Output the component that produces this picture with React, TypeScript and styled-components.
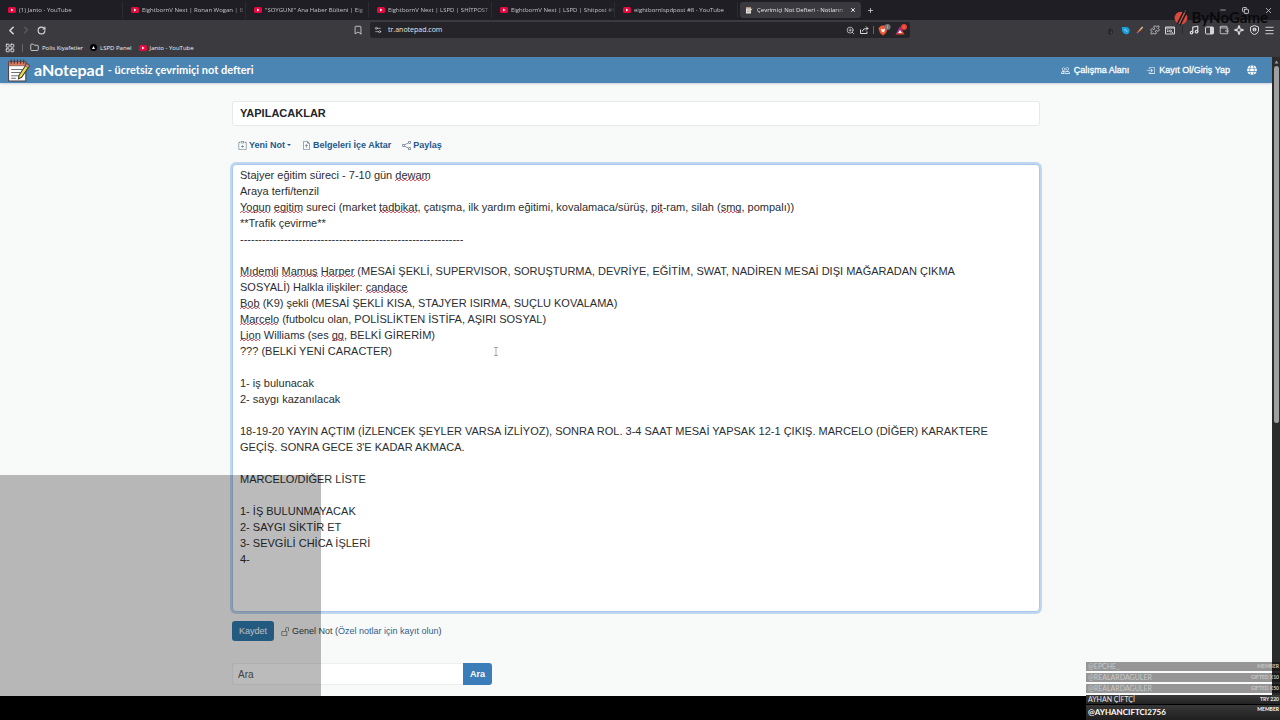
import React, { useLayoutEffect, useRef, useState } from "react";
import styled, { createGlobalStyle, css } from "styled-components";
import {
  BsBoxArrowInRight,
  BsClipboardPlus,
  BsFileEarmarkArrowUp,
  BsPeople,
  BsShare,
  BsUnlock,
} from "react-icons/bs";
import { FaGlobe } from "react-icons/fa";
import {
  Bookmark,
  ChevronLeft,
  ChevronRight,
  Copy,
  Folder,
  LayoutGrid,
  Menu,
  Minus,
  Music,
  Plus,
  Puzzle,
  RotateCw,
  Settings2,
  Sparkle,
  Wallet,
  X,
  ZoomIn,
} from "lucide-react";

const sans = `"Liberation Sans", Arial, sans-serif`;
const ui = `"Open Sans", "Segoe UI", sans-serif`;
const display = `Lato, sans-serif`;

const GlobalStyle = createGlobalStyle`
  *, *::before, *::after { box-sizing: border-box; }
  body { margin: 0; background: #000; font-family: ${sans}; }
  button, input, textarea { font: inherit; margin: 0; }
  button { border: 0; background: none; padding: 0; color: inherit; }
  a { color: inherit; text-decoration: none; }
  svg { display: block; flex: none; }
`;

const Desktop = styled.div`
  position: relative;
  display: flex;
  flex-direction: column;
  min-height: 100vh;
  padding-bottom: 24px;
`;

/* ---------- browser chrome ---------- */

const TabStrip = styled.div`
  display: flex;
  align-items: center;
  height: 20px;
  background: #1f1e24;
  color: #c4c4c8;
  font: 6px/8px ${ui};
`;

const TabItem = styled.button<{ $active?: boolean }>`
  display: flex;
  align-items: center;
  gap: 3px;
  flex: 0 1 123px;
  min-width: 0;
  height: 16px;
  padding: 0 0 0 8px;
  border-right: 1px solid #2c2b31;
  ${(p) =>
    p.$active &&
    css`
      flex-basis: 121px;
      margin-left: 2px;
      padding: 0 5px;
      gap: 4px;
      border: 0;
      border-radius: 3px;
      background: #3a393e;
      color: #e8e8ea;
    `}
`;

const TabLabel = styled.span`
  flex: 1;
  min-width: 0;
  white-space: nowrap;
  text-align: left;
  mask-image: linear-gradient(90deg, #000 88%, rgba(0, 0, 0, 0.2));
`;

const NewTab = styled.button`
  margin-left: 6px;
`;

const WindowButtons = styled.div`
  display: flex;
  gap: 15px;
  margin-left: auto;
  padding-right: 7px;
  color: #d8d8da;
`;

const Toolbar = styled.div`
  display: grid;
  grid-template-columns: 1fr minmax(0, 540px) 1fr;
  align-items: center;
  height: 20px;
  background: #3b3a3e;
  color: #d6d6d8;
`;

const NavButtons = styled.div`
  display: flex;
  align-items: center;
  gap: 5px;
  padding: 0 7px 0 6px;
`;

const BookmarkButton = styled.button`
  margin-left: auto;
`;

const AddressBar = styled.form`
  display: flex;
  align-items: center;
  gap: 4px;
  height: 16px;
  padding: 0 3px 0 4px;
  border-radius: 3px;
  background: #242429;
`;

const AddressInput = styled.input`
  flex: 1;
  min-width: 0;
  padding: 0 0 0 2px;
  border: 0;
  outline: 0;
  background: none;
  color: #e4e4e6;
  font: 7px/10px ${ui};
`;

const Divider = styled.span`
  width: 1px;
  height: 8px;
  background: #66656b;
`;

const Extensions = styled.div`
  display: flex;
  align-items: center;
  justify-content: flex-end;
  gap: 5px;
  padding-right: 6px;
`;

const ToolIcon = styled.button`
  display: flex;
  align-items: center;
  justify-content: center;
  width: 10px;
  height: 10px;
`;

const ExtensionGap = styled.span`
  width: 1px;
  height: 8px;
  margin: 0 1px 0 2px;
  background: #2a292d;
`;

const BookmarksBar = styled.nav`
  display: flex;
  align-items: center;
  gap: 7px;
  height: 17px;
  padding: 0 5px 2px;
  background: #3b3a3e;
  color: #f0f0f2;
  font: 6px/8px ${ui};
`;

const BookmarkLink = styled.a`
  display: flex;
  align-items: center;
  gap: 3px;
`;

/* ---------- page ---------- */

const Viewport = styled.div`
  display: flex;
  flex: 1;
`;

const Page = styled.div`
  flex: 1;
  min-width: 0;
  background: #f8faf9;
`;

const ScrollTrack = styled.div`
  width: 8px;
  padding: 2px 1px 0 2px;
  background: #2b2b2b;
`;

const ScrollThumb = styled.div`
  width: 5px;
  height: 56%;
  margin-top: 1px;
  border-radius: 3px;
  background: #9f9f9f;
`;

const SiteHeader = styled.header`
  display: flex;
  align-items: center;
  height: 26px;
  padding: 0 15px 0 7px;
  background: #4a85b4;
  color: #fff;
  box-shadow: 0 1px 2px rgba(0, 40, 80, 0.2);
`;

const Brand = styled.a`
  display: flex;
  align-items: center;
  gap: 4px;
  font: 700 16px/20px ${display};
`;

const Tagline = styled.small`
  font: 700 11px/20px ${display};
`;

const AccountNav = styled.nav`
  display: flex;
  align-items: center;
  gap: 17px;
  margin-left: auto;
  font: 9px/12px ${sans};
  -webkit-text-stroke: 0.3px currentColor;
`;

const IconLink = styled.a`
  display: flex;
  align-items: center;
  gap: 4px;
`;

const Container = styled.main`
  max-width: 808px;
  margin: 0 auto;
  padding: 18px 0 10px;
`;

const TitleInput = styled.input`
  display: block;
  width: 100%;
  height: 25px;
  padding: 0 7px 1px;
  border: 1px solid #e6eaeb;
  border-radius: 3px;
  outline: 0;
  background: #fff;
  color: #212529;
  font: 700 11px/16px ${sans};
`;

const Actions = styled.div`
  display: flex;
  align-items: center;
  gap: 11px;
  height: 38px;
  padding: 0 6px;
  color: #24588c;
  font: 700 9px/12px ${sans};
`;

const Action = styled.button`
  display: flex;
  align-items: center;
  gap: 2px;
  svg {
    color: #52677d;
  }
`;

const Caret = styled.span`
  border: 2px solid transparent;
  border-top-color: currentColor;
  border-bottom: 0;
`;

const Editor = styled.div`
  display: grid;
  min-height: 448px;
`;

const NoteArea = styled.textarea`
  grid-area: 1 / 1;
  width: 100%;
  padding: 2px 40px 2px 7px;
  border: 1px solid #a9c8ee;
  border-radius: 4px;
  outline: 0;
  background: #fff;
  box-shadow: 0 0 0 2px #c1d7f0;
  color: #2b2e31;
  font: 11px/16px ${sans};
  white-space: pre-wrap;
  overflow-wrap: break-word;
  resize: none;
  overflow: hidden;
`;

const SpellingMarks = styled.svg`
  grid-area: 1 / 1;
  width: 100%;
  height: 100%;
  pointer-events: none;
`;

const SaveRow = styled.div`
  display: flex;
  align-items: center;
  gap: 7px;
  margin-top: 9px;
  color: #3a3f44;
  font: 9px/12px ${sans};
`;

const PrimaryButton = styled.button<{ $joined?: boolean }>`
  height: ${(p) => (p.$joined ? 22 : 20)}px;
  padding: 0 7px;
  border-radius: ${(p) => (p.$joined ? "0 3px 3px 0" : "3px")};
  background: ${(p) => (p.$joined ? "#3a7db8" : "#317caf")};
  color: #fff;
  font-weight: ${(p) => (p.$joined ? 700 : 400)};
`;

const Visibility = styled.span`
  display: flex;
  align-items: center;
  gap: 2px;
`;

const RegisterLink = styled.a`
  color: #2f5c90;
`;

const SearchForm = styled.form`
  display: flex;
  max-width: 260px;
  margin-top: 22px;
  font: 9px/12px ${sans};
`;

const SearchInput = styled.input`
  flex: 1;
  min-width: 0;
  height: 22px;
  padding: 0 5px;
  border: 1px solid #eceff0;
  border-right: 0;
  border-radius: 3px 0 0 3px;
  outline: 0;
  background: #fff;
  font: 10px/14px ${sans};
  &::placeholder {
    color: #595c5f;
    opacity: 1;
  }
`;

/* ---------- stream overlays ---------- */

const CameraShade = styled.div`
  position: absolute;
  left: 0;
  bottom: 24px;
  width: 321px;
  height: 221px;
  background: rgba(0, 0, 0, 0.265);
  pointer-events: none;
`;

const Pointer = styled.svg`
  position: absolute;
  left: 493px;
  top: 347px;
  pointer-events: none;
`;

const Sponsor = styled.div`
  position: absolute;
  top: 7px;
  right: 12px;
  display: flex;
  align-items: center;
  gap: 3px;
  color: #09090b;
  font: 700 15px/20px ${display};
  pointer-events: none;
`;

const EventList = styled.ul`
  position: absolute;
  right: 0;
  bottom: 0;
  display: flex;
  flex-direction: column;
  gap: 2px;
  width: 194px;
  margin: 0;
  padding: 0;
  list-style: none;
  font-family: ${display};
`;

const EventRow = styled.li<{ $tone: "faded" | "solid" | "latest" }>`
  display: flex;
  justify-content: space-between;
  height: 9px;
  padding: 0 1px 0 2px;
  background: rgba(0, 0, 0, 0.4);
  color: #c9c9c9;
  font-size: 7px;
  line-height: 9px;
  ${(p) =>
    p.$tone === "solid" &&
    css`
      background: linear-gradient(#3a3a3a, #232323);
      color: #e6e6e6;
    `}
  ${(p) =>
    p.$tone === "latest" &&
    css`
      height: 15px;
      margin-top: -1px;
      background: linear-gradient(#383838, #1f1f1f);
      color: #fff;
      font-size: 8px;
      line-height: 15px;
      font-weight: 700;
    `}
`;

const EventKind = styled.span`
  font-size: 5px;
  line-height: 8px;
  font-weight: 700;
`;

/* ---------- small drawings ---------- */

const YouTubeIcon = () => (
  <svg width="8" height="6" viewBox="0 0 16 12">
    <rect width="16" height="12" rx="3" fill="#e5093f" />
    <path d="M6 3l5 3-5 3z" fill="#fff" />
  </svg>
);

const NotepadLogo = ({ size }: { size: number }) => (
  <svg width={size} height={size} viewBox="0 0 44 44">
    <path d="M3 6h33v36H3z" fill="#fff" stroke="#4a3f42" strokeWidth="2" />
    <path d="M3 5h33v8H3z" fill="#d97a5c" stroke="#4a3f42" strokeWidth="1" />
    <path d="M8 1v8M14 1v8M20 1v8M26 1v8M32 1v8" stroke="#4a3236" strokeWidth="2" />
    <path d="M8 20h21M8 26h17M8 32h15M8 37h9" stroke="#6b7177" strokeWidth="2" />
    <path d="M38 9l5 4-15 22-6 3 1-7z" fill="#f0e04a" stroke="#3f3a34" strokeWidth="2" />
    <path d="M38 9l5 4-3 4-5-4z" fill="#e58a86" stroke="#3f3a34" strokeWidth="1" />
  </svg>
);

const PageIcon = () => (
  <svg width="8" height="8" viewBox="0 0 16 16">
    <path d="M2 2h10v13H2z" fill="#e6e4e2" />
    <path d="M2 2h10v3H2z" fill="#b58f80" />
    <path d="M4 8h6M4 11h5" stroke="#77757a" strokeWidth="1" />
    <path d="M14 5l-5 8" stroke="#c9c27a" strokeWidth="2" />
  </svg>
);

const TriangleBadge = () => (
  <svg width="7" height="7" viewBox="0 0 14 14">
    <circle cx="7" cy="7" r="7" fill="#000" />
    <path d="M7 4l3 6H4z" fill="#fff" />
  </svg>
);

const BraveLion = () => (
  <svg width="13" height="12" viewBox="0 0 26 24">
    <path d="M3 6l4-3h8l3 3 1 3-3 9-6 5-6-5L1 9z" fill="#ef5a34" />
    <path d="M6 9l4 2 4-2-1 5-3 3-3-3z" fill="#fff" />
    <circle cx="19" cy="6" r="6" fill="#77767c" />
    <path d="M19 3v6" stroke="#d0d0d2" strokeWidth="1" />
  </svg>
);

const BraveRewards = () => (
  <svg width="12" height="12" viewBox="0 0 24 24">
    <path d="M10 5l9 16H1z" fill="#e8452f" />
    <path d="M10 5l5 9-14 7z" fill="#9a2b8f" />
    <path d="M10 12l4 6H6z" fill="#fff" />
    <circle cx="18" cy="6" r="6" fill="#ee3c30" />
    <path d="M18 3v6" stroke="#fbb" strokeWidth="1" />
  </svg>
);

const DropIcon = () => (
  <svg width="7" height="9" viewBox="0 0 14 18">
    <path d="M6 1c0 5-4 6-4 11a5 5 0 0010 0c0-3-1-4-1-6-1 2-3 2-3 1z" fill="#29282d" />
    <path d="M8 10c-2 3 0 5 1 5s2-3-1-5z" fill="#7b2f86" />
  </svg>
);

const BlueBadge = () => (
  <svg width="9" height="9" viewBox="0 0 18 18">
    <path d="M2 2h9a7 7 0 016 9c-1 6-8 7-11 4S1 10 2 2z" fill="#1d9fdc" />
    <path d="M6 8c3-2 6 1 6 4" stroke="#8bd6f5" strokeWidth="2" fill="none" />
  </svg>
);

const PenIcon = () => (
  <svg width="8" height="8" viewBox="0 0 18 18">
    <path d="M15 2L9 9" stroke="#e9c9a4" strokeWidth="3" />
    <path d="M10 8l-5 5" stroke="#f07f2e" strokeWidth="3" />
    <path d="M5 13l-3 3" stroke="#a452c8" strokeWidth="3" />
  </svg>
);

const SearchPanelIcon = () => (
  <svg width="10" height="9" viewBox="0 0 20 18" fill="none" stroke="currentColor" strokeWidth="2">
    <path d="M1 2h18v14H1zM1 4h18" />
    <circle cx="11" cy="10" r="2" />
    <path d="M13 12l3 2M4 8h3M4 11h3" />
  </svg>
);

const SidePanelIcon = () => (
  <svg width="9" height="9" viewBox="0 0 18 18">
    <rect x="1" y="2" width="16" height="14" rx="2" fill="none" stroke="currentColor" strokeWidth="2" />
    <path d="M10 2h7v14h-7z" fill="currentColor" />
  </svg>
);

const VpnIcon = () => (
  <svg width="9" height="10" viewBox="0 0 18 20">
    <path d="M9 1l8 3v6c0 5-4 8-8 9-4-1-8-4-8-9V4z" fill="none" stroke="currentColor" strokeWidth="2" />
    <circle cx="9" cy="9" r="4" fill="currentColor" />
    <path d="M9 7v5" stroke="#3b3a3e" strokeWidth="1" />
  </svg>
);

const SponsorMark = () => (
  <svg width="15" height="17" viewBox="0 0 28 32">
    <ellipse cx="13" cy="17" rx="12" ry="12" fill="#dd4a3a" />
    <path d="M20 1L6 29M25 3L11 31" stroke="#1b1a1e" strokeWidth="3" />
    <path d="M22 2L9 29" stroke="#8c8583" strokeWidth="1" />
  </svg>
);

/* ---------- content ---------- */

const tabs = [
  "(1) Janto - YouTube",
  "EightbornV Next | Ronan Wogan | B",
  "\"SOYGUN!\" Ana Haber Bülteni | Eig",
  "EightbornV Next | LSPD | SHİTPOST",
  "EightbornV Next | LSPD | Shitpost #8",
  "eightbornlspdpost #8 - YouTube",
];

const initialNote = `Stajyer eğitim süreci - 7-10 gün dewam
Araya terfi/tenzil
Yogun egitim sureci (market tadbikat, çatışma, ilk yardım eğitimi, kovalamaca/sürüş, pit-ram, silah (smg, pompalı))
**Trafik çevirme**
-------------------------------------------------------------

Mıdemli Mamuş Harper (MESAİ ŞEKLİ, SUPERVISOR, SORUŞTURMA, DEVRİYE, EĞİTİM, SWAT, NADİREN MESAİ DIŞI MAĞARADAN ÇIKMA SOSYALİ) Halkla ilişkiler: candace
Bob (K9) şekli (MESAİ ŞEKLİ KISA, STAJYER ISIRMA, SUÇLU KOVALAMA)
Marcelo (futbolcu olan, POLİSLİKTEN İSTİFA, AŞIRI SOSYAL)
Lion Williams (ses gg, BELKİ GİRERİM)
??? (BELKİ YENİ CARACTER)

1- iş bulunacak
2- saygı kazanılacak

18-19-20 YAYIN AÇTIM (İZLENCEK ŞEYLER VARSA İZLİYOZ), SONRA ROL. 3-4 SAAT MESAİ YAPSAK 12-1 ÇIKIŞ. MARCELO (DİĞER) KARAKTERE GEÇİŞ. SONRA GECE 3'E KADAR AKMACA.

MARCELO/DİĞER LİSTE

1- İŞ BULUNMAYACAK
2- SAYGI SİKTİR ET
3- SEVGİLİ CHİCA İŞLERİ
4-`;

const unknownWords =
  /dewam|Yogun|egitim|tadbikat|\bpit(?=-)|smg|Mıdemli|Mamuş|Harper|candace|Bob|Marcelo|Lion|gg/g;

const events = [
  { name: "@EPCHE_", kind: "MEMBER", tone: "faded" },
  { name: "@REALARDAGULER", kind: "GIFTED X10", tone: "faded" },
  { name: "@REALARDAGULER", kind: "GIFTED X50", tone: "faded" },
  { name: "AYHAN ÇİFTÇİ", kind: "TRY 220", tone: "solid" },
  { name: "@AYHANCIFTCI2756", kind: "MEMBER", tone: "latest" },
] as const;

type Mark = { x: number; y: number; width: number };

/* Lays the note out in a throwaway copy of the text area and returns
   where each unknown word ends up. */
function findMarks(area: HTMLTextAreaElement, note: string): Mark[] {
  const mirror = document.createElement("div");
  mirror.className = area.className;
  mirror.textContent = note;
  area.parentElement!.appendChild(mirror);
  const origin = mirror.getBoundingClientRect();
  const text = mirror.firstChild;
  const marks: Mark[] = [];
  if (text) {
    for (const match of note.matchAll(unknownWords)) {
      const range = document.createRange();
      range.setStart(text, match.index!);
      range.setEnd(text, match.index! + match[0].length);
      const box = range.getBoundingClientRect();
      marks.push({
        x: Math.round(box.left - origin.left),
        y: Math.round(box.bottom - origin.top),
        width: Math.round(box.width),
      });
    }
  }
  mirror.remove();
  return marks;
}

function squiggle({ x, y, width }: Mark) {
  let path = `M${x} ${y}`;
  for (let step = 2, up = true; step <= width; step += 2, up = !up) {
    path += `l2 ${up ? -2 : 2}`;
  }
  return path;
}

function NoteEditor() {
  const [note, setNote] = useState(initialNote);
  const [marks, setMarks] = useState<Mark[]>([]);
  const area = useRef<HTMLTextAreaElement>(null);

  useLayoutEffect(() => {
    const update = () => setMarks(findMarks(area.current!, note));
    update();
    window.addEventListener("resize", update);
    return () => window.removeEventListener("resize", update);
  }, [note]);

  return (
    <Editor>
      <NoteArea
        ref={area}
        aria-label="Not"
        spellCheck={false}
        value={note}
        onChange={(e) => setNote(e.target.value)}
      />
      <SpellingMarks aria-hidden="true">
        {marks.map((mark, i) => (
          <path key={i} d={squiggle(mark)} fill="none" stroke="#e0596a" strokeWidth="1" />
        ))}
      </SpellingMarks>
    </Editor>
  );
}

export default function App() {
  return (
    <Desktop>
      <GlobalStyle />
      <TabStrip>
        {tabs.map((label) => (
          <TabItem key={label}>
            <YouTubeIcon />
            <TabLabel>{label}</TabLabel>
          </TabItem>
        ))}
        <TabItem $active>
          <PageIcon />
          <TabLabel>Çevrimiçi Not Defteri - Notların</TabLabel>
          <X size={6} strokeWidth={4} />
        </TabItem>
        <NewTab aria-label="Yeni sekme">
          <Plus size={7} strokeWidth={3} />
        </NewTab>
        <WindowButtons>
          <button aria-label="Küçült"><Minus size={8} /></button>
          <button aria-label="Geri yükle"><Copy size={7} strokeWidth={3} /></button>
          <button aria-label="Kapat"><X size={9} /></button>
        </WindowButtons>
      </TabStrip>

      <Toolbar>
        <NavButtons>
          <ToolIcon aria-label="Geri"><ChevronLeft size={13} strokeWidth={3} /></ToolIcon>
          <ToolIcon aria-label="İleri"><ChevronRight size={12} color="#77767b" /></ToolIcon>
          <ToolIcon aria-label="Yenile"><RotateCw size={9} strokeWidth={3} /></ToolIcon>
          <BookmarkButton aria-label="Yer imi"><Bookmark size={10} strokeWidth={2} /></BookmarkButton>
        </NavButtons>
        <AddressBar>
          <Settings2 size={8} />
          <AddressInput aria-label="Adres" defaultValue="tr.anotepad.com" />
          <ToolIcon type="button" aria-label="Yakınlaştır"><ZoomIn size={9} /></ToolIcon>
          <ToolIcon type="button" aria-label="Paylaş">
            <svg width="9" height="8" viewBox="0 0 18 16" fill="none" stroke="currentColor" strokeWidth="2">
              <path d="M1 7v8h13v-4M5 11c0-5 4-6 11-6M12 1l4 4-4 4" />
            </svg>
          </ToolIcon>
          <Divider />
          <BraveLion />
          <BraveRewards />
        </AddressBar>
        <Extensions>
          <ToolIcon aria-label="Eklenti 1"><DropIcon /></ToolIcon>
          <ToolIcon aria-label="Eklenti 2"><BlueBadge /></ToolIcon>
          <ToolIcon aria-label="Eklenti 3"><PenIcon /></ToolIcon>
          <ToolIcon aria-label="Eklentiler"><Puzzle size={10} strokeWidth={2} /></ToolIcon>
          <ToolIcon aria-label="Sekme ara"><SearchPanelIcon /></ToolIcon>
          <ExtensionGap />
          <ToolIcon aria-label="Medya"><Music size={10} strokeWidth={3} /></ToolIcon>
          <ToolIcon aria-label="Kenar çubuğu"><SidePanelIcon /></ToolIcon>
          <ToolIcon aria-label="Cüzdan"><Wallet size={10} strokeWidth={2} /></ToolIcon>
          <ToolIcon aria-label="Yapay zeka"><Sparkle size={10} strokeWidth={3} /></ToolIcon>
          <ToolIcon aria-label="VPN"><VpnIcon /></ToolIcon>
          <ToolIcon aria-label="Menü"><Menu size={11} /></ToolIcon>
        </Extensions>
      </Toolbar>

      <BookmarksBar>
        <LayoutGrid size={10} strokeWidth={2} />
        <Divider />
        <BookmarkLink href="#polis"><Folder size={9} strokeWidth={2} />Polis Kıyafetler</BookmarkLink>
        <BookmarkLink href="#lspd"><TriangleBadge />LSPD Panel</BookmarkLink>
        <BookmarkLink href="#janto"><YouTubeIcon />Janto - YouTube</BookmarkLink>
      </BookmarksBar>

      <Viewport>
        <Page>
          <SiteHeader>
            <Brand href="#home">
              <NotepadLogo size={23} />
              <span>aNotepad</span>
              <Tagline>- ücretsiz çevrimiçi not defteri</Tagline>
            </Brand>
            <AccountNav>
              <IconLink href="#workspace"><BsPeople size={9} />Çalışma Alanı</IconLink>
              <IconLink href="#login"><BsBoxArrowInRight size={9} />Kayıt Ol/Giriş Yap</IconLink>
              <IconLink href="#language" aria-label="Dil"><FaGlobe size={10} /></IconLink>
            </AccountNav>
          </SiteHeader>

          <Container>
            <TitleInput aria-label="Başlık" defaultValue="YAPILACAKLAR" />
            <Actions>
              <Action><BsClipboardPlus size={9} />Yeni Not<Caret /></Action>
              <Action><BsFileEarmarkArrowUp size={9} />Belgeleri İçe Aktar</Action>
              <Action><BsShare size={9} />Paylaş</Action>
            </Actions>
            <NoteEditor />
            <SaveRow>
              <PrimaryButton>Kaydet</PrimaryButton>
              <Visibility>
                <BsUnlock size={9} />
                <span>
                  Genel Not (<RegisterLink href="#register">Özel notlar için kayıt olun</RegisterLink>)
                </span>
              </Visibility>
            </SaveRow>
            <SearchForm>
              <SearchInput aria-label="Ara" placeholder="Ara" />
              <PrimaryButton $joined>Ara</PrimaryButton>
            </SearchForm>
          </Container>
        </Page>
        <ScrollTrack>
          <svg width="5" height="6" viewBox="0 0 10 12">
            <path d="M5 3l4 6H1z" fill="#9f9f9f" />
          </svg>
          <ScrollThumb />
        </ScrollTrack>
      </Viewport>

      <CameraShade />
      <Pointer width="6" height="9" viewBox="0 0 12 18" fill="none" stroke="#55585b" strokeWidth="1">
        <path d="M2 1h8M6 1v16M2 17h8" />
      </Pointer>
      <Sponsor>
        <SponsorMark />
        ByNoGame
      </Sponsor>
      <EventList>
        {events.map((event, i) => (
          <EventRow key={i} $tone={event.tone}>
            {event.name}
            <EventKind>{event.kind}</EventKind>
          </EventRow>
        ))}
      </EventList>
    </Desktop>
  );
}
